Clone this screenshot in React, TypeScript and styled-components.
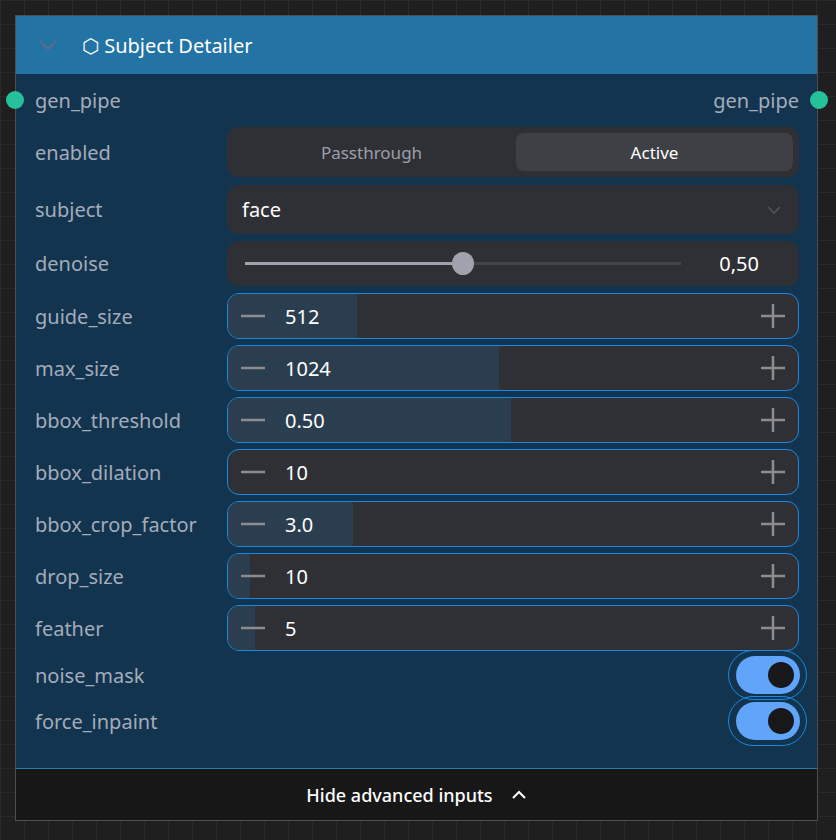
import styled, { createGlobalStyle } from 'styled-components';

const C = {
  canvas: '#1f1f1f',
  grid: '#2a2a2a',
  header: '#2473a5',
  body: '#13344f',
  widget: '#2f3035',
  fill: '#2b3e4f',
  focus: '#1a8ae0',
  label: '#a3acbb',
  text: '#ffffff',
  socket: '#26c19a',
  toggle: '#60a5fa',
  footer: '#171717'
};

const Global = createGlobalStyle`
  body {
    margin: 0;
    background-color: ${C.canvas};
    background-image:
      linear-gradient(${C.grid} 1px, transparent 1px),
      linear-gradient(90deg, ${C.grid} 1px, transparent 1px);
    background-size: 24px 24px;
    font-family: "Noto Sans", "Open Sans", sans-serif;
  }
`;

const Node = styled.div`
  margin: 15px 0 0 15px;
  width: 803px;
  height: 806px;
  border: 1px solid #4e4e4e;
  box-sizing: border-box;
  display: flex;
  flex-direction: column;
  background: ${C.body};
`;

const Header = styled.div`
  height: 58px;
  background: ${C.header};
  display: flex;
  align-items: center;
  padding-left: 22px;
  gap: 24px;
  color: ${C.text};
  font-size: 20px;
`;

const Body = styled.div`
  flex: 1;
  display: flex;
  flex-direction: column;
  padding: 12px 18px 0 19px;
  position: relative;
`;

const Row = styled.div<{ $h?: number; $mb?: number }>`
  display: grid;
  grid-template-columns: 192px 1fr;
  align-items: center;
  height: ${p => p.$h ?? 46}px;
  margin-bottom: ${p => p.$mb ?? 6}px;
`;

const Label = styled.div`
  color: ${C.label};
  font-size: 20px;
  white-space: nowrap;
`;

const IORow = styled.div`
  display: flex;
  justify-content: space-between;
  align-items: center;
  height: 28px;
  margin-bottom: 13px;
  position: relative;
`;

const Socket = styled.span<{ $side: 'l' | 'r' }>`
  position: absolute;
  top: 5px;
  ${p => (p.$side === 'l' ? 'left: -29px;' : 'right: -29px;')}
  width: 18px;
  height: 18px;
  border-radius: 50%;
  background: ${C.socket};
`;

const Segmented = styled.div`
  height: 50px;
  background: ${C.widget};
  border-radius: 12px;
  display: grid;
  grid-template-columns: 1fr 1fr;
  padding: 6px;
  box-sizing: border-box;
  gap: 6px;
`;

const Seg = styled.div<{ $on?: boolean }>`
  border-radius: 8px;
  display: flex;
  align-items: center;
  justify-content: center;
  font-size: 17px;
  color: ${p => (p.$on ? C.text : '#9aa0aa')};
  background: ${p => (p.$on ? '#3f4046' : 'transparent')};
`;

const Select = styled.div`
  height: 49px;
  background: ${C.widget};
  border-radius: 12px;
  display: flex;
  align-items: center;
  justify-content: space-between;
  padding: 0 18px 0 15px;
  color: ${C.text};
  font-size: 20px;
`;

const SliderBox = styled.div`
  height: 45px;
  background: ${C.widget};
  border-radius: 12px;
  display: flex;
  align-items: center;
  padding: 0 40px 0 18px;
  gap: 38px;
  color: ${C.text};
  font-size: 20px;
`;

const Track = styled.div`
  flex: 1;
  height: 3px;
  background: #444549;
  position: relative;
`;

const TrackFill = styled.div`
  height: 100%;
  background: #a0a2ae;
`;

const Thumb = styled.span`
  position: absolute;
  top: -10px;
  width: 22px;
  height: 23px;
  margin-left: -11px;
  border-radius: 50%;
  background: #a0a2ae;
`;

const NumBox = styled.div`
  height: 46px;
  border: 1.5px solid ${C.focus};
  border-radius: 12px;
  background: ${C.widget};
  box-sizing: border-box;
  position: relative;
  overflow: hidden;
  display: flex;
  align-items: center;
  color: ${C.text};
  font-size: 20px;
`;

const NumFill = styled.div`
  position: absolute;
  left: 0;
  top: 0;
  bottom: 0;
  background: ${C.fill};
`;

const NumText = styled.span`
  position: relative;
  flex: 1;
  padding-left: 57px;
`;

const Btn = styled.span<{ $left?: boolean }>`
  position: ${p => (p.$left ? 'absolute' : 'relative')};
  left: 0;
  width: 50px;
  display: flex;
  justify-content: center;
`;

const ToggleRow = styled.div`
  display: flex;
  justify-content: space-between;
  align-items: center;
  height: 46px;
`;

const ToggleRing = styled.div`
  width: 79px;
  height: 50px;
  border: 1.5px solid ${C.focus};
  border-radius: 25px;
  box-sizing: border-box;
  display: flex;
  align-items: center;
  justify-content: center;
  margin-right: -8px;
`;

const Pill = styled.div`
  width: 64px;
  height: 38px;
  border-radius: 19px;
  background: ${C.toggle};
  display: flex;
  align-items: center;
  justify-content: flex-end;
  padding-right: 6px;
  box-sizing: border-box;
`;

const Knob = styled.span`
  width: 26px;
  height: 26px;
  border-radius: 50%;
  background: #18181b;
`;

const Footer = styled.div`
  height: 51px;
  background: ${C.footer};
  border-top: 1px solid #2a7ab0;
  display: flex;
  align-items: center;
  justify-content: center;
  gap: 18px;
  color: ${C.text};
  font-size: 18px;
  font-weight: 500;
`;

const Minus = () => (
  <svg width="26" height="26" viewBox="0 0 26 26"><path d="M1 13h24" stroke="#8d8d8d" strokeWidth="2.5" /></svg>
);
const Plus = () => (
  <svg width="26" height="26" viewBox="0 0 26 26"><path d="M1 13h24M13 1v24" stroke="#8d8d8d" strokeWidth="2.5" /></svg>
);

const nums = [
  { name: 'guide_size', value: '512', pct: 22.7 },
  { name: 'max_size', value: '1024', pct: 47.6 },
  { name: 'bbox_threshold', value: '0.50', pct: 49.7 },
  { name: 'bbox_dilation', value: '10', pct: 0 },
  { name: 'bbox_crop_factor', value: '3.0', pct: 21.9 },
  { name: 'drop_size', value: '10', pct: 3.9 },
  { name: 'feather', value: '5', pct: 4.7 }
];

export default function App() {
  return (
    <>
      <Global />
      <Node>
        <Header>
          <svg width="20" height="12" viewBox="0 0 20 12"><path d="M2 2l8 8 8-8" stroke="#5d6a8c" strokeWidth="2" fill="none" /></svg>
          <span>⬡ Subject Detailer</span>
        </Header>
        <Body>
          <IORow>
            <Socket $side="l" />
            <Label>gen_pipe</Label>
            <Label>gen_pipe</Label>
            <Socket $side="r" />
          </IORow>
          <Row $h={50} $mb={8}>
            <Label>enabled</Label>
            <Segmented>
              <Seg>Passthrough</Seg>
              <Seg $on>Active</Seg>
            </Segmented>
          </Row>
          <Row $h={49} $mb={7}>
            <Label>subject</Label>
            <Select>
              face
              <svg width="14" height="8" viewBox="0 0 14 8"><path d="M1 1l6 6 6-6" stroke="#55565c" strokeWidth="1.5" fill="none" /></svg>
            </Select>
          </Row>
          <Row $h={45} $mb={7}>
            <Label>denoise</Label>
            <SliderBox>
              <Track>
                <TrackFill style={{ width: '50%' }} />
                <Thumb style={{ left: '50%' }} />
              </Track>
              0,50
            </SliderBox>
          </Row>
          {nums.map(n => (
            <Row key={n.name}>
              <Label>{n.name}</Label>
              <NumBox>
                <NumFill style={{ width: `${n.pct}%` }} />
                <Btn $left><Minus /></Btn>
                <NumText>{n.value}</NumText>
                <Btn><Plus /></Btn>
              </NumBox>
            </Row>
          ))}
          <ToggleRow style={{ marginTop: -5 }}>
            <Label>noise_mask</Label>
            <ToggleRing><Pill><Knob /></Pill></ToggleRing>
          </ToggleRow>
          <ToggleRow>
            <Label>force_inpaint</Label>
            <ToggleRing><Pill><Knob /></Pill></ToggleRing>
          </ToggleRow>
        </Body>
        <Footer>
          Hide advanced inputs
          <svg width="16" height="10" viewBox="0 0 16 10"><path d="M2 8l6-6 6 6" stroke="#fff" strokeWidth="2" fill="none" /></svg>
        </Footer>
      </Node>
    </>
  );
}
